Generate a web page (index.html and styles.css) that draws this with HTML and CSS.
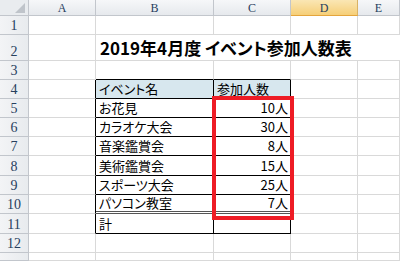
FILE: index.html
```html
<!DOCTYPE html>
<html lang="ja">
<head>
<meta charset="utf-8">
<link rel="stylesheet" href="styles.css">
</head>
<body>
<div class="sheet">
  <div class="grid">
    <!-- header row -->
    <div class="hd corner"><svg class="tri" width="10" height="10" viewBox="0 0 10 10"><polygon points="10,0 10,10 0,10" fill="#bfc4ca"/></svg></div>
    <div class="hd col">A</div>
    <div class="hd col">B</div>
    <div class="hd col">C</div>
    <div class="hd col sel">D</div>
    <div class="hd col">E</div>
    <!-- row 1 -->
    <div class="hd row">1</div><div class="c"></div><div class="c"></div><div class="c"></div><div class="c"></div><div class="c"></div>
    <!-- row 2 -->
    <div class="hd row">2</div><div class="c"></div><div class="c title">2019年4月度 イベント参加人数表</div>
    <!-- row 3 -->
    <div class="hd row">3</div><div class="c"></div><div class="c tb"></div><div class="c tb"></div><div class="c"></div><div class="c"></div>
    <!-- row 4 -->
    <div class="hd row">4</div><div class="c tr"></div><div class="c t th">イベント名</div><div class="c t th">参加人数</div><div class="c"></div><div class="c"></div>
    <!-- rows 5-10 -->
    <div class="hd row">5</div><div class="c tr"></div><div class="c t">お花見</div><div class="c t num">10人</div><div class="c"></div><div class="c"></div>
    <div class="hd row">6</div><div class="c tr"></div><div class="c t">カラオケ大会</div><div class="c t num">30人</div><div class="c"></div><div class="c"></div>
    <div class="hd row">7</div><div class="c tr"></div><div class="c t">音楽鑑賞会</div><div class="c t num">8人</div><div class="c"></div><div class="c"></div>
    <div class="hd row">8</div><div class="c tr"></div><div class="c t">美術鑑賞会</div><div class="c t num">15人</div><div class="c"></div><div class="c"></div>
    <div class="hd row">9</div><div class="c tr"></div><div class="c t">スポーツ大会</div><div class="c t num">25人</div><div class="c"></div><div class="c"></div>
    <div class="hd row">10</div><div class="c tr"></div><div class="c t dbl">パソコン教室</div><div class="c t num dbl">7人</div><div class="c"></div><div class="c"></div>
    <!-- row 11 -->
    <div class="hd row">11</div><div class="c tr"></div><div class="c t">計</div><div class="c t num"></div><div class="c"></div><div class="c"></div>
    <!-- row 12 -->
    <div class="hd row">12</div><div class="c"></div><div class="c"></div><div class="c"></div><div class="c"></div><div class="c"></div>
    <!-- row 13 -->
    <div class="hd row"></div><div class="c"></div><div class="c"></div><div class="c"></div><div class="c"></div><div class="c"></div>
  </div>
  <div class="mark"></div>
</div>
</body>
</html>
```
FILE: styles.css
```css
html, body {
  margin: 0;
  padding: 0;
  background: #ffffff;
}
.sheet {
  position: relative;
  width: 400px;
  height: 261px;
  overflow: hidden;
}
.grid {
  display: grid;
  grid-template-columns: 29px 67px 118px 77px 67px 42px;
  grid-template-rows: 16px 19px 26px 19px 19px 19px 19px 19px 20px 19px 19px 20px 19px 8px;
  font-family: "Noto Sans CJK JP", "Noto Sans", sans-serif;
  font-feature-settings: "palt";
  font-size: 13px;
  color: #000;
}
.c {
  box-sizing: border-box;
  border-right: 1px solid #d9d9d9;
  border-bottom: 1px solid #d9d9d9;
  display: flex;
  align-items: flex-end;
  padding: 0 2px 1px 3px;
  line-height: 16px;
  white-space: nowrap;
}
.hd {
  box-sizing: border-box;
  background: linear-gradient(#f6f7f9, #e6e9ed);
  border-right: 1px solid #c2c6cc;
  border-bottom: 1px solid #c2c6cc;
  font-family: "Liberation Serif", "DejaVu Serif", serif;
  color: #27405e;
  display: flex;
  justify-content: center;
}
.hd.col {
  font-size: 12px;
  align-items: center;
  line-height: 14px;
}
.hd.sel {
  background: linear-gradient(#fae6b4, #f6cf78);
  border-bottom-color: #e4a53c;
  border-right-color: #d9b264;
}
.hd.row {
  font-size: 14px;
  align-items: flex-end;
  line-height: 17px;
  background: linear-gradient(90deg, #f3f4f6, #e8ebee);
}
.corner {
  position: relative;
  background: #e9ecef;
}
.tri {
  position: absolute;
  right: 3px;
  bottom: 2px;
}
.title {
  grid-column: 3 / span 4;
  font-weight: bold;
  font-size: 17px;
  line-height: 20px;
  padding-left: 4px;
  padding-bottom: 2px;
  border-right: none;
}
.tb {
  border-bottom-color: #000;
}
.tr {
  border-right-color: #000;
}
.t {
  border-right-color: #000;
  border-bottom-color: #000;
}
.th {
  background: #d7e7ee;
}
.num {
  justify-content: flex-end;
  padding-right: 2px;
}
.dbl {
  border-bottom: 3px double #555;
  padding-bottom: 0;
}
.mark {
  position: absolute;
  left: 212px;
  top: 96px;
  width: 82px;
  height: 124px;
  box-sizing: border-box;
  border: 4px solid #ee1c25;
}
```
